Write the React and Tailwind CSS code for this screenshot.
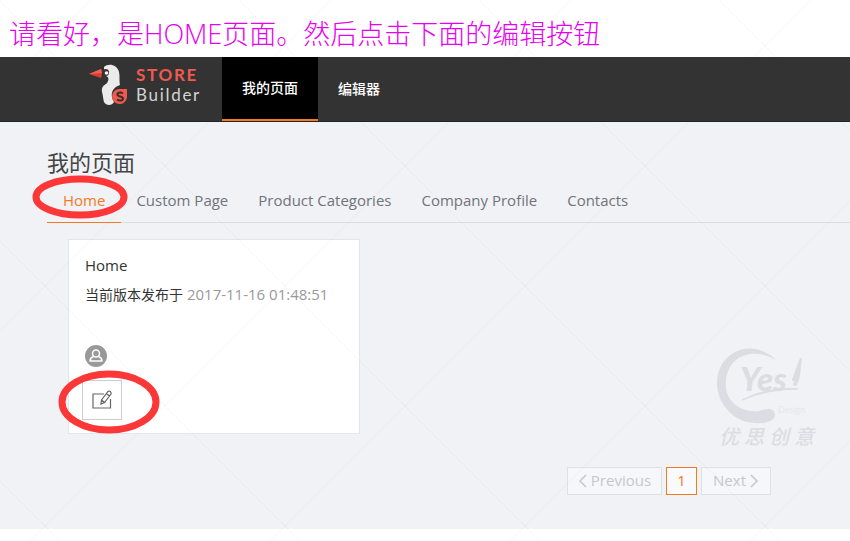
import React from "react";

const tabs = ["Home", "Custom Page", "Product Categories", "Company Profile", "Contacts"];

function Logo() {
  return (
    <a href="#" aria-label="Store Builder" className="flex w-[222px] shrink-0 items-center gap-2 pb-2 pl-[89px]">
      <svg width="39" height="42" viewBox="0 0 39 42" aria-hidden="true">
        <path d="M15 3 C19-1 28 0 30 8 C31 12 30 16 31 21 C24 23 20 30 25 38 C23 42 17 42 15 38 C14 35 14 31 13 28 C12 22 16 21 18 19 C20 16 20 13 17 12 L15 11 Z" fill="#ebebeb" />
        <circle cx="16.500" cy="8.500" r="3.500" fill="#333333" />
        <circle cx="17.500" cy="9" r="1.800" fill="#f4f4f4" />
        <path d="M0 10 L12 5 Q14 9 12 14Z" fill="#d9402f" />
        <path d="M0 10 L12 5 L13 9Z" fill="#f0605a" />
        <path d="M31 25 H38 V33 A7.500 7.500 0 1 1 31 25Z" fill="#f0594c" />
        <path d="M34 29.500 C31 27.500 28 29 28.500 31 C29 33 34 32 34 34.500 C34 37 30 37 28 35.500" fill="none" stroke="#35302f" strokeWidth="2" />
      </svg>
      <span className="flex flex-col font-['Lato',sans-serif] text-[17px] leading-5 tracking-widest">
        <span className="font-bold text-[#ee5a50]">STORE</span>
        <span className="text-[#d4d4d4]">Builder</span>
      </span>
    </a>
  );
}

function Backdrop() {
  return (
    <svg className="pointer-events-none absolute inset-0 h-full w-full" aria-hidden="true">
      <defs>
        <pattern id="lattice" x="45" y="46" width="240" height="240" patternUnits="userSpaceOnUse">
          <path d="M0 0 L240 240 M240 0 L0 240" stroke="#000000" strokeOpacity="0.032" />
        </pattern>
      </defs>
      <rect width="100%" height="100%" fill="url(#lattice)" />
    </svg>
  );
}

function Watermark() {
  return (
    <div className="pointer-events-none absolute top-[346px] right-[36px] w-[99px] text-[#dcdde2]">
      <svg width="102" height="78" viewBox="0 0 102 78" aria-hidden="true">
        <path d="M61 14 C44-3 18-1 6 20 C-6 43 10 75 39 77 C50 78 60 75 60 69 C59 62 53 62 44 65 C25 67 9 55 11 35 C13 8 40 1 61 14Z" fill="currentColor" />
        <path d="M27 54 Q54 40 83 43 Q53 43 27 54Z" fill="currentColor" stroke="currentColor" />
        <path d="M86 12 L80 28 L78 34 L82 36 L84 30Z" fill="currentColor" stroke="currentColor" strokeWidth="2" />
        <circle cx="80" cy="38" r="2" fill="currentColor" />
        <text x="25" y="45" fontFamily="Lato, sans-serif" fontWeight="900" fontStyle="italic" fontSize="33" fill="currentColor">Yes</text>
        <text x="63" y="67" fontFamily="Lato, sans-serif" fontSize="9" fill="#e6e7eb">Design</text>
      </svg>
      <div className="flex justify-between pl-1 font-['Noto_Sans_CJK_SC',sans-serif] text-xl leading-6 font-medium italic">
        <span>优</span><span>思</span><span>创</span><span>意</span>
      </div>
    </div>
  );
}

export default function App() {
  return (
    <div className="relative min-h-screen overflow-hidden bg-white font-['Open_Sans','Noto_Sans_CJK_SC',sans-serif] text-[15px] text-[#333333]">
      <p className="h-[57px] pt-3 pl-[9px] text-[27px] leading-[43px] font-light whitespace-nowrap text-[#e800f0]">
        请看好，是HOME页面。然后点击下面的编辑按钮
      </p>

      <header className="flex h-[65px] border-b border-[#242424] bg-[#333333]">
        <Logo />
        <nav className="flex text-sm font-medium text-white">
          <a href="#" className="flex items-center border-b-2 border-[#f47a22] bg-black px-5">我的页面</a>
          <a href="#" className="flex items-center px-5">编辑器</a>
        </nav>
      </header>

      <main className="bg-[#f1f2f6] pt-6 pb-[34px] pl-[47px]">
        <h1 className="text-[22px] leading-8 text-[#444444]">我的页面</h1>
        <nav className="flex h-[45px] border-b border-[#dcdde2]">
          {tabs.map((tab, i) =>
            i === 0 ? (
              <div key={tab} className="relative -mb-px flex border-b border-[#f47a22]">
                <a href="#" aria-current="page" className="px-4 leading-[44px] text-[#f47a22]">{tab}</a>
                <svg className="pointer-events-none absolute -top-[3px] -left-[15px]" width="98" height="44" aria-hidden="true">
                  <ellipse cx="48" cy="22" rx="44" ry="18" fill="none" stroke="#fb3737" strokeWidth="7" />
                </svg>
              </div>
            ) : (
              <a key={tab} href="#" className="px-[15px] leading-[44px] text-[#71747a]">{tab}</a>
            )
          )}
        </nav>

        <article className="mt-4 ml-[21px] w-[292px] border border-[#e4e5ea] bg-white px-4 pt-[11px] pb-[13px]">
          <h2 className="leading-7">Home</h2>
          <p className="h-[30px] leading-[30px]">
            <span className="text-sm leading-[30px]">当前版本发布于</span> <time className="text-[#999999]">2017-11-16 01:48:51</time>
          </p>
          <svg className="mt-9" width="22" height="22" viewBox="0 0 22 22" role="img" aria-label="Owner">
            <circle cx="11" cy="11" r="11" fill="#999999" />
            <circle cx="11" cy="8.500" r="3.500" fill="none" stroke="white" strokeWidth="1.500" />
            <path d="M8.500 11.500 C6 12.500 5 14 5 16 H17 C17 14 16 12.500 13.500 11.500" fill="none" stroke="white" strokeWidth="1.500" strokeLinejoin="round" />
          </svg>
          <div className="relative mt-[13px] -ml-[3px] w-10">
            <button type="button" aria-label="Edit" className="flex h-10 w-10 items-center justify-center border border-[#cccccc] bg-white">
              <svg width="22" height="22" viewBox="0 0 22 22" fill="none" stroke="#666666" strokeWidth="1.200" aria-hidden="true">
                <path d="M13 5 H2 V19 H19.500 V10" />
                <path d="M10 15 L10.500 11 L17 2.500 Q19 1.500 20 3.500 L20 5 L13.500 13.500 Z M15.500 4.500 L18.500 7 M10.500 11 L13.500 13.500" />
              </svg>
            </button>
            <svg className="pointer-events-none absolute -top-[11px] -left-[25px]" width="106" height="66" aria-hidden="true">
              <ellipse cx="52" cy="33" rx="47" ry="28" fill="none" stroke="#fb3737" strokeWidth="7" />
            </svg>
          </div>
        </article>

        <div className="mt-[33px] mr-[79px] flex justify-end gap-1 text-[#c5c7cc]">
          <button type="button" className="flex h-7 items-center gap-1 border border-[#dfe0e5] bg-[#f6f7fa] px-[10px] pb-px">
            <svg width="9" height="14" viewBox="0 0 9 14" fill="none" stroke="currentColor" strokeWidth="1.500" aria-hidden="true">
              <path d="M8 1 L2 7 L8 13" />
            </svg>
            Previous
          </button>
          <button type="button" className="h-7 w-[31px] border border-[#f47a22] bg-[#fafafc] pb-px text-[#f47a22]">1</button>
          <button type="button" className="flex h-7 items-center gap-1 border border-[#dfe0e5] bg-[#f6f7fa] px-[11px] pb-px">
            Next
            <svg width="9" height="14" viewBox="0 0 9 14" fill="none" stroke="currentColor" strokeWidth="1.500" aria-hidden="true">
              <path d="M1 1 L7 7 L1 13" />
            </svg>
          </button>
        </div>
      </main>
      <Backdrop />
      <Watermark />
    </div>
  );
}
